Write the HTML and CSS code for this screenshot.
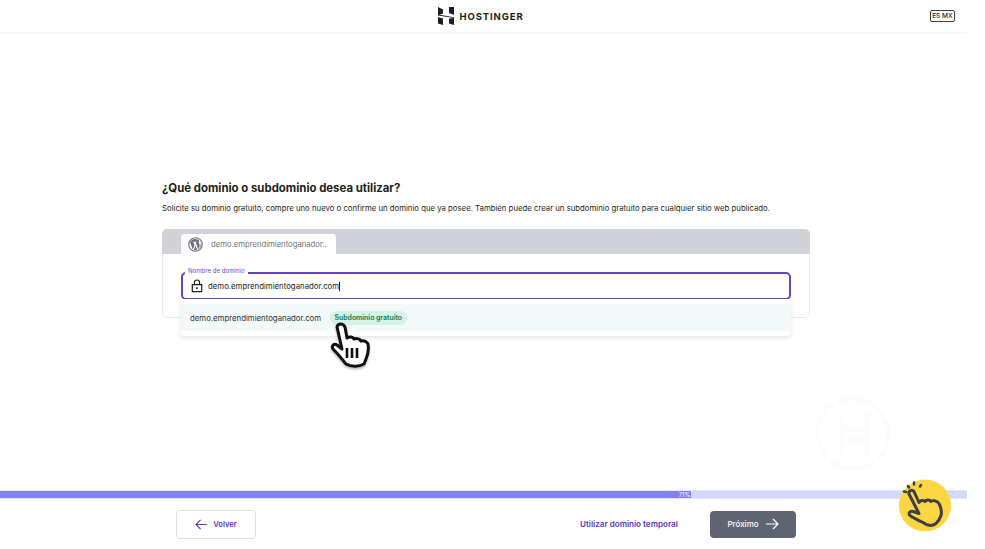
FILE: index.html
```html
<!DOCTYPE html>
<html lang="es">
<head>
    <meta charset="UTF-8">
    <title>Hostinger - Dominio</title>
    <link rel="stylesheet" href="styles.css">
</head>
<body>
    <div class="page">
        <header class="header">
            <div class="logo">
                <svg class="logo-mark" viewBox="0 0 16 18" width="16" height="18">
                    <path fill="#1d1e20" d="M0 0l5 2.500V6.500L0 8.500zM11 0l5 0V8l-5-2zM0 7.500l16 2.800V11L0 8.500zM0 10l5 1.500V18L0 16.500zM11 11.500l5-.5V18l-5-1.500z"/>
                </svg>
                <span class="logo-text">HOSTINGER</span>
            </div>
            <div class="lang">ES MX</div>
        </header>

        <main class="main">
            <h1 class="title">¿Qué dominio o subdominio desea utilizar?</h1>
            <p class="subtitle">Solicite su dominio gratuito, compre uno nuevo o confirme un dominio que ya posee. También puede crear un subdominio gratuito para cualquier sitio web publicado.</p>

            <section class="card">
                <div class="tabs">
                    <div class="tab">
                        <svg class="wp-icon" viewBox="0 0 16 16" width="15" height="15">
                            <circle cx="8" cy="8" r="7.200" fill="none" stroke="#6d7081" stroke-width="1.200"/>
                            <path fill="#6d7081" d="M2.200 5.500l3 8 1.700-5-1-3h-1V5h4.500v.5h-1.200l3 8 1-3.500c.6-2-.2-3-.7-4-.3-.7.2-1.500 1-1.500A6 6 0 0 0 2.200 5.500z"/>
                            <path fill="#6d7081" d="M8 9l-1.800 5a6.500 6.500 0 0 0 3.700-.1zM13.500 5.500c.4 2 0 3.800-1.800 7.500a6.500 6.500 0 0 0 1.800-7.500z"/>
                        </svg>
                        <span class="tab-label">demo.emprendimientoganador..</span>
                    </div>
                </div>
                <div class="card-body">
                    <div class="field">
                        <span class="field-label">Nombre de dominio</span>
                        <svg class="lock" viewBox="0 0 14 16" width="12" height="14">
                            <path fill="none" stroke="#1d1e20" stroke-width="1.400" d="M1.500 6.500h11v8h-11zM4 6.500V4a3 3 0 0 1 6 0v2.500"/>
                            <rect x="6" y="9.500" width="2" height="2" fill="#1d1e20"/>
                        </svg>
                        <span class="field-value">demo.emprendimientoganador.com</span><span class="caret"></span>

                        <div class="menu">
                            <div class="menu-item">
                                <span class="menu-text">demo.emprendimientoganador.com</span>
                                <span class="badge">Subdominio gratuito</span>
                            </div>
                        </div>
                    </div>
                </div>
            </section>

            <svg class="cursor" viewBox="0 0 44 46" width="44" height="46">
                <path fill="#fff" stroke="#111" stroke-width="3" stroke-linejoin="round" d="M8 5c1-4 6-4 8 0l2 11c3-2 6-1 7 1 3-1 6 0 7 2 3-1 6 1 7 3 1 5 0 10-2 15l-2 5c-5 3-13 3-18 0-4-5-8-10-13-15-2-3 1-6 4-4l5 4z"/>
                <path fill="none" stroke="#111" stroke-width="2.600" d="M18 26v10M23 26v10M28 26v10"/>
            </svg>

            <svg class="watermark" viewBox="0 0 76 76" width="76" height="76">
                <circle cx="38" cy="38" r="35" fill="none" stroke="#fcfcfb" stroke-width="4"/>
                <path fill="none" stroke="#fcfcfb" stroke-width="6" d="M27 18v15h25M52 18v27H27M27 33v27M52 45v15"/>
            </svg>
        </main>

        <div class="progress">
            <div class="progress-fill" style="width: 71.500%">
                <span class="progress-text">71%</span>
            </div>
        </div>

        <footer class="footer">
            <button class="back-btn">
                <svg viewBox="0 0 14 12" width="13" height="11">
                    <path fill="none" stroke="#5b34c9" stroke-width="1.200" d="M13 6H1M6 1L1 6l5 5"/>
                </svg>
                Volver
            </button>
            <a class="skip-link">Utilizar dominio temporal</a>
            <button class="next-btn">
                Próximo
                <svg viewBox="0 0 14 12" width="14" height="12">
                    <path fill="none" stroke="#fff" stroke-width="1.200" d="M1 6h12M8 1l5 5-5 5"/>
                </svg>
            </button>
        </footer>

        <svg class="pointer-badge" viewBox="0 0 54 54" width="54" height="54">
            <circle cx="27" cy="26.500" r="26" fill="#fdd644"/>
            <path fill="none" stroke="#3c3f46" stroke-width="2.600" stroke-linecap="round" d="M10 7l1 1.500M16 3.500v2M23 6l-1 1.500M6 12.500l2 .5"/>
            <path fill="none" stroke="#3c3f46" stroke-width="3" stroke-linejoin="round" stroke-linecap="round" d="M11 15c-1-3 3-5 5-2.500l5 11c1-2 4-3 6-1 1-2 5-2 6 0 1-1.500 6-1 8 2 2 4 3 8 2 12-1 3-3 6-5 8-4 3-9 2-13-1-4-2-9-4-13-7-2-2 0-5 3-4l6 2z"/>
        </svg>
    </div>
</body>
</html>
```

FILE: styles.css
```css
* {
    margin: 0;
    padding: 0;
    box-sizing: border-box;
}

body {
    font-family: Inter, "Liberation Sans", sans-serif;
    background: #ffffff;
    color: #1d1e20;
    height: 100vh;
    overflow: hidden;
}

.page {
    position: relative;
    display: flex;
    flex-direction: column;
    width: 967px;
    height: 549px;
}

.header {
    position: relative;
    display: flex;
    align-items: center;
    justify-content: center;
    height: 33px;
    flex-shrink: 0;
    border-bottom: 1px solid #f3f3f4;
}

.logo {
    display: flex;
    align-items: center;
    gap: 5px;
    margin-left: -5px;
}

.logo-text {
    font-size: 9.500px;
    font-weight: 700;
    letter-spacing: 0.9px;
}

.lang {
    position: absolute;
    right: 12px;
    top: 10px;
    border: 1px solid #3c3f46;
    border-radius: 2px;
    padding: 1px 1.500px;
    font-size: 6.500px;
    font-weight: 500;
    line-height: 8px;
}

.main {
    position: relative;
    flex: 1;
    padding: 148px 157px 0 162px;
}

.title {
    font-size: 11.400px;
    font-weight: 700;
    line-height: 14px;
    margin-bottom: 8px;
}

.subtitle {
    font-size: 7.770px;
    line-height: 11px;
    margin-bottom: 15px;
    white-space: nowrap;
}

.card {
    width: 648px;
    height: 89px;
    border: 1px solid #e8e9ec;
    border-radius: 5px;
}

.tabs {
    height: 25px;
    margin: -1px -1px 0;
    padding: 5px 0 0 19px;
    background: #d2d3d8;
    border-radius: 5px 5px 0 0;
}

.tab {
    display: flex;
    align-items: center;
    gap: 8px;
    width: 155px;
    height: 20px;
    padding-left: 7px;
    background: #ffffff;
    border-radius: 4px 4px 0 0;
}

.tab-label {
    font-size: 7.700px;
    color: #6d7081;
    white-space: nowrap;
}

.card-body {
    padding: 18px 18px 0;
}

.field {
    position: relative;
    display: flex;
    align-items: center;
    width: 610px;
    height: 28px;
    padding-left: 8px;
    border: 2px solid #6243cc;
    border-radius: 5px;
}

.field-label {
    position: absolute;
    left: 2px;
    top: -7px;
    padding: 0 3px;
    background: #ffffff;
    color: #6d45d8;
    font-size: 6.100px;
    line-height: 8px;
}

.field-value {
    margin-left: 5px;
    font-size: 7.800px;
}

.caret {
    width: 1px;
    height: 9px;
    background: #1d1e20;
}

.menu {
    position: absolute;
    left: -2px;
    right: -2px;
    top: 25px;
    height: 37px;
    padding-top: 5px;
    background: #ffffff;
    border-radius: 0 0 4px 4px;
    box-shadow: 0 2px 4px rgba(29, 30, 32, 0.12);
}

.menu-item {
    display: flex;
    align-items: center;
    gap: 9px;
    height: 27px;
    padding-left: 9px;
    background: #f3f8f8;
}

.menu-text {
    font-size: 7.800px;
    color: #2f3136;
}

.badge {
    padding: 0 4.500px;
    background: #d5f2e6;
    border-radius: 7px;
    color: #077a55;
    font-size: 6.900px;
    font-weight: 600;
    line-height: 14px;
}

.cursor {
    position: absolute;
    left: 329px;
    top: 289px;
    filter: drop-shadow(0 2px 1px rgba(0, 0, 0, 0.25));
}

.watermark {
    position: absolute;
    left: 815px;
    top: 363px;
}

.progress {
    height: 9px;
    flex-shrink: 0;
    background: #d2d9fa;
    border-top: 1px solid #e4e7fc;
    border-bottom: 1px solid #e4e7fc;
}

.progress-fill {
    height: 100%;
    display: flex;
    align-items: center;
    justify-content: flex-end;
    padding-right: 1px;
    background: #8380fd;
}

.progress-text {
    color: #ffffff;
    font-size: 6px;
}

.footer {
    display: flex;
    align-items: center;
    height: 50px;
    flex-shrink: 0;
    padding: 0 0 0 176px;
}

.back-btn {
    display: flex;
    align-items: center;
    justify-content: center;
    gap: 5px;
    width: 80px;
    height: 29px;
    background: #ffffff;
    border: 1px solid #dfe0e3;
    border-radius: 4px;
    color: #5b34c9;
    font-family: inherit;
    font-size: 7.600px;
    font-weight: 600;
}

.skip-link {
    margin-left: 324px;
    width: 130px;
    color: #5b34c9;
    font-size: 8.100px;
    font-weight: 600;
    white-space: nowrap;
}

.next-btn {
    display: flex;
    align-items: center;
    justify-content: center;
    gap: 6px;
    width: 86px;
    height: 27px;
    background: #5f6472;
    border: none;
    border-radius: 4px;
    color: #ffffff;
    font-family: inherit;
    font-size: 8px;
    font-weight: 500;
}

.pointer-badge {
    position: absolute;
    left: 898px;
    top: 479px;
}
```
